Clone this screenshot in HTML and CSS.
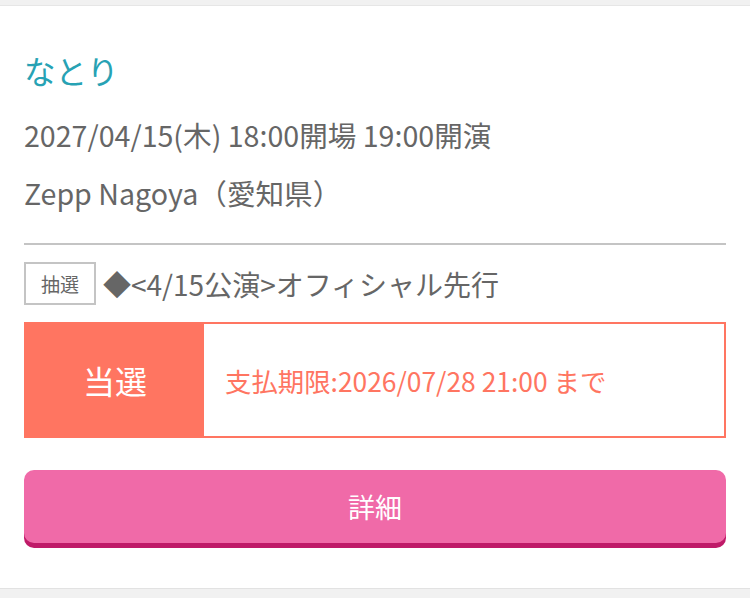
FILE: index.html
```html
<!DOCTYPE html>
<html lang="ja">
<head>
<meta charset="utf-8">
<link rel="stylesheet" href="styles.css">
</head>
<body>
<div class="page">
  <div class="card">
    <h1 class="artist">なとり</h1>
    <p class="info">2027/04/15(木) 18:00開場 19:00開演</p>
    <p class="info venue">Zepp Nagoya（愛知県）</p>
    <hr class="divider">
    <div class="sale">
      <span class="badge">抽選</span>
      <span class="sale-name">◆&lt;4/15公演&gt;オフィシャル先行</span>
    </div>
    <div class="result">
      <div class="result-label">当選</div>
      <div class="result-text">支払期限:2026/07/28 21:00 まで</div>
    </div>
    <a class="detail-btn">詳細</a>
  </div>
</div>
</body>
</html>
```
FILE: styles.css
```css
html, body {
  margin: 0;
  padding: 0;
  background: #f1f1f1;
}
body {
  font-family: "Noto Sans CJK JP", "Noto Sans", sans-serif;
  color: #666;
}
.page {
  padding: 5px 0 10px;
}
.card {
  background: #fff;
  border-top: 1px solid #e6e6e6;
  border-bottom: 1px solid #e2e2e2;
  padding: 42px 24px 45px;
}
.artist {
  margin: 0;
  font-size: 31.5px;
  font-weight: 400;
  line-height: 44px;
  color: #27a2b4;
}
.info {
  margin: 25px 0 0;
  font-size: 28.6px;
  line-height: 36px;
}
.venue {
  margin-top: 22px;
}
.divider {
  border: 0;
  border-top: 2px solid #c4c4c4;
  margin: 32px 0 0;
}
.sale {
  display: flex;
  align-items: center;
  gap: 7px;
  margin-top: 17px;
}
.badge {
  box-sizing: border-box;
  width: 72px;
  height: 43px;
  border: 2px solid #c4c4c4;
  font-size: 19px;
  line-height: 1;
  display: flex;
  align-items: center;
  justify-content: center;
}
.sale-name {
  font-size: 28px;
  line-height: 36px;
}
.result {
  display: flex;
  margin-top: 17px;
  height: 116px;
  box-sizing: border-box;
  border: 2px solid #ff7561;
}
.result-label {
  width: 178px;
  background: #ff7561;
  color: #fff;
  font-size: 32px;
  display: flex;
  align-items: center;
  justify-content: center;
}
.result-text {
  flex: 1;
  display: flex;
  align-items: center;
  padding-left: 21px;
  color: #ff7561;
  font-size: 26.4px;
}
.detail-btn {
  display: flex;
  align-items: center;
  justify-content: center;
  margin-top: 32px;
  height: 73px;
  border-radius: 10px;
  background: #f06aa8;
  box-shadow: 0 5px 0 #bf1a68;
  color: #fff;
  font-size: 27px;
}
```
